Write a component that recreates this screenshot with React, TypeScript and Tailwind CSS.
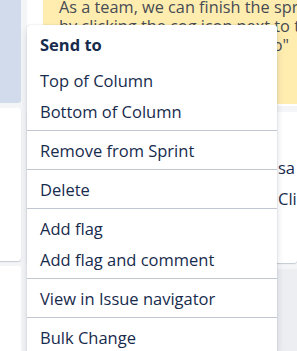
export default function App() {
  const groups: string[][] = [
    ['Remove from Sprint'],
    ['Delete'],
    ['Add flag', 'Add flag and comment'],
    ['View in Issue navigator'],
    ['Bulk Change'],
  ];

  return (
    <div
      className="relative w-[297px] h-[351px] overflow-hidden bg-[#f4f5f7]"
      style={{ fontFamily: '"Open Sans", "Noto Sans", sans-serif' }}
    >
      {/* board behind the menu */}
      <div className="flex gap-[6px] h-full">
        <div className="w-[21px] flex flex-col gap-[5px] shrink-0">
          <div className="h-[103px] bg-[#d1dbeb] rounded-br-[3px]" />
          <div className="h-[153px] bg-white rounded-r-[3px] shadow-[0_1px_1px_rgba(9,30,66,0.2)]" />
          <div className="flex-1 bg-white rounded-tr-[3px]" />
        </div>

        <div className="flex-1 flex flex-col gap-[6px] min-w-0">
          <div className="h-[106px] bg-white pl-[16px] shrink-0">
            <div className="h-full bg-[#ffedb0] pl-[16px] text-[16.3px] leading-[19px] text-[#464b54] -mt-[2px]">
              <div className="whitespace-nowrap">As a team, we can finish the sprint</div>
              <div className="whitespace-nowrap">by clicking the cog icon next to the</div>
              <div className="whitespace-nowrap flex justify-end pr-[8px]">"Complete sprint" or "To Do"</div>
            </div>
          </div>
          <div className="h-[151px] bg-white rounded-b-[3px] shadow-[0_1px_1px_rgba(9,30,66,0.2)] flex justify-end shrink-0">
            <div className="w-[19px] overflow-hidden pt-[40px] text-[16.5px] leading-[31px] text-[#172b4d]">
              <div className="whitespace-nowrap">sa</div>
              <div className="whitespace-nowrap">Click</div>
            </div>
          </div>
          <div className="flex-1 bg-[#eceef1]" />
        </div>
      </div>

      {/* context menu */}
      <div className="absolute left-[27px] top-[25px] w-[250px] bg-white rounded-[3px] shadow-[0_4px_8px_-2px_rgba(9,30,66,0.25),0_0_1px_rgba(9,30,66,0.31)] text-[#172b4d] text-[16.5px]">
        <div className="pt-[4px] pb-[3px]">
          <div className="px-[13px] pt-[6px] pb-[10px] leading-[20px] font-bold">Send to</div>
          <div className="px-[13px] h-[31px] flex items-center leading-[20px]">Top of Column</div>
          <div className="px-[13px] h-[31px] flex items-center leading-[20px]">Bottom of Column</div>
        </div>
        {groups.map((items, i) => (
          <div key={i} className="border-t border-[#c1c7d0] pt-[4px] pb-[3px]">
            {items.map((label) => (
              <div key={label} className="px-[13px] h-[31px] flex items-center leading-[20px]">
                {label}
              </div>
            ))}
          </div>
        ))}
      </div>
    </div>
  );
}
